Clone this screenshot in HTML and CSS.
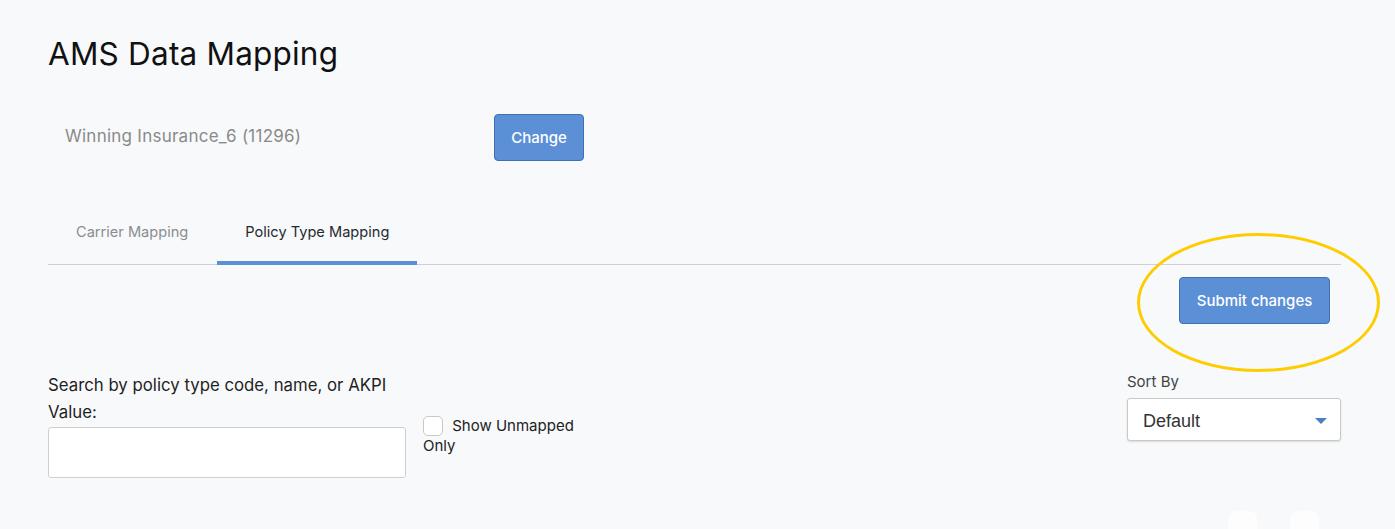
FILE: index.html
```html
<!DOCTYPE html>
<html lang="en">
<head>
<meta charset="utf-8">
<title>AMS Data Mapping</title>
<link rel="stylesheet" href="styles.css">
</head>
<body>
<div class="page">
  <h1 class="title">AMS Data Mapping</h1>

  <div class="account-row">
    <div class="account-name">Winning Insurance_6 (11296)</div>
    <button class="btn">Change</button>
  </div>

  <div class="tabs">
    <div class="tab">Carrier Mapping</div>
    <div class="tab active">Policy Type Mapping</div>
  </div>

  <div class="submit-row">
    <div class="submit-wrap">
      <button class="btn btn-submit">Submit changes</button>
      <div class="highlight"></div>
    </div>
  </div>

  <div class="filter-row">
    <div class="search">
      <label class="search-label">Search by policy type code, name, or AKPI Value:</label>
      <input class="search-input" type="text">
    </div>
    <label class="unmapped">
      <span class="checkbox"></span>
      <span class="unmapped-text">Show Unmapped Only</span>
    </label>
    <div class="sort">
      <div class="sort-label">Sort By</div>
      <div class="select">
        <span>Default</span>
        <span class="caret"></span>
      </div>
    </div>
  </div>

  <div class="bottom-row">
    <div class="ghost"></div>
    <div class="ghost"></div>
  </div>
</div>
</body>
</html>
```

FILE: styles.css
```css
* { box-sizing: border-box; }
html, body {
  margin: 0;
  height: 100%;
  background: #f8f9fb;
}
body {
  font-family: Inter, "Open Sans", "Liberation Sans", sans-serif;
  color: #222;
  overflow: hidden;
}
.page {
  padding: 0 54px 0 48px;
  height: 529px;
  display: flex;
  flex-direction: column;
}
.title {
  margin: 34px 0 0 0;
  font-size: 31.5px;
  line-height: 40px;
  font-weight: 400;
  color: #111;
  letter-spacing: 0.2px;
}
.account-row {
  display: flex;
  align-items: center;
  margin-top: 40px;
}
.account-name {
  width: 446px;
  padding-left: 17px;
  font-size: 17px;
  letter-spacing: 0.25px;
  color: #8a8a8a;
  padding-bottom: 4px;
}
.btn {
  font-family: Inter, "Open Sans", "Liberation Sans", sans-serif;
  background: #5b8fd6;
  border: 1px solid #3f70b4;
  border-radius: 4px;
  color: #fff;
  font-size: 15px;
  font-weight: 500;
  height: 47px;
  padding: 0 16px;
  cursor: pointer;
}
.account-row .btn { width: 90px; padding: 0; }
.tabs {
  display: flex;
  margin-top: 39px;
  border-bottom: 1px solid #cdd0d4;
}
.tab {
  padding: 23px 28px 20px;
  font-size: 14.6px;
  color: #8a8d91;
  border-bottom: 4px solid transparent;
  margin-bottom: -1px;
}
.tab:first-child { padding-right: 29px; }
.tab.active {
  color: #262a30;
  border-bottom-color: #5b8fd6;
}
.submit-row {
  display: flex;
  justify-content: flex-end;
  margin-top: 12px;
  padding-right: 11px;
}
.submit-wrap { position: relative; }
.btn-submit { width: 151px; padding: 0; }
.highlight {
  position: absolute;
  left: -42px;
  top: -44px;
  width: 243px;
  height: 139px;
  border: 3px solid #ffcc00;
  border-radius: 50%;
  pointer-events: none;
}
.filter-row {
  display: flex;
  align-items: flex-start;
  margin-top: 48px;
}
.search { width: 358px; }
.search-label {
  display: block;
  font-size: 16.8px;
  line-height: 27px;
  color: #1f1f1f;
}
.search-input {
  display: block;
  width: 358px;
  height: 51px;
  margin-top: 1px;
  border: 1px solid #cfcfcf;
  border-radius: 3px;
  background: #fff;
}
.unmapped {
  margin-left: 17px;
  margin-top: 44px;
  width: 160px;
  font-size: 15px;
  line-height: 20px;
  color: #222;
}
.checkbox {
  display: inline-block;
  width: 20px;
  height: 20px;
  border: 1px solid #c8c8c8;
  border-radius: 5px;
  background: #fff;
  vertical-align: -5px;
  margin-right: 5px;
}
.sort {
  margin-left: auto;
  width: 214px;
  margin-top: 0;
}
.sort-label {
  font-size: 15px;
  line-height: 20px;
  color: #444;
}
.select {
  margin-top: 6px;
  height: 43px;
  background: #fff;
  border: 1px solid #c9c9c9;
  border-radius: 3px;
  box-shadow: 0 1px 2px rgba(0,0,0,0.12);
  display: flex;
  align-items: center;
  justify-content: space-between;
  padding: 3px 13px 0 15px;
  font-family: "Liberation Sans", Arial, sans-serif;
  font-size: 18px;
  color: #333;
}
.caret {
  width: 0;
  height: 0;
  border-left: 6px solid transparent;
  border-right: 6px solid transparent;
  border-top: 6px solid #4a7fc0;
}
.bottom-row {
  margin-top: auto;
  display: flex;
  gap: 33px;
  justify-content: flex-end;
  padding-right: 22px;
}
.ghost {
  width: 29px;
  height: 18px;
  background: #fdfdfe;
  border-radius: 8px 8px 0 0;
}
```
